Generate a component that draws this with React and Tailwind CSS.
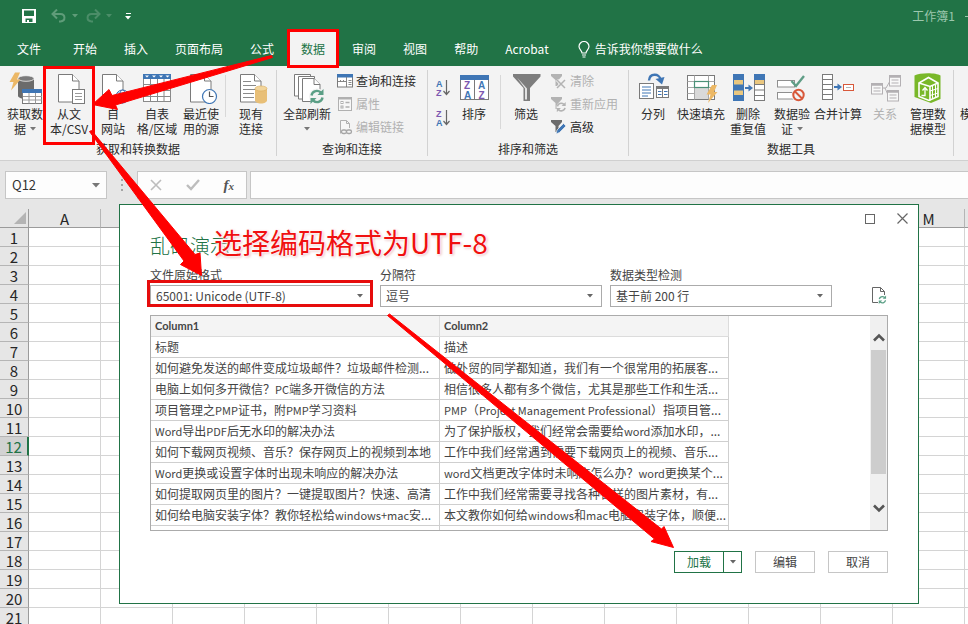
import React, { useState } from "react";

const GREY = "#7a7a7a";
const BLUE = "#3f76b5";

const TABS = ["文件", "开始", "插入", "页面布局", "公式", "数据", "审阅", "视图", "帮助", "Acrobat"];

// B-L sit behind the import dialog, so only the outer columns carry a letter
const COLUMNS = ["A", "", "", "", "", "", "", "", "", "", "", "", "M", ""];
const ROWS = Array.from({ length: 21 }, (_, i) => i + 1);

const PREVIEW = [
  ["标题", "描述"],
  ["如何避免发送的邮件变成垃圾邮件？垃圾邮件检测...", "做外贸的同学都知道，我们有一个很常用的拓展客..."],
  ["电脑上如何多开微信？PC端多开微信的方法", "相信很多人都有多个微信，尤其是那些工作和生活..."],
  ["项目管理之PMP证书，附PMP学习资料", "PMP（Project Management Professional）指项目管..."],
  ["Word导出PDF后无水印的解决办法", "为了保护版权，我们经常会需要给word添加水印，..."],
  ["如何下载网页视频、音乐？保存网页上的视频到本地", "工作中我们经常遇到需要下载网页上的视频、音乐..."],
  ["Word更换或设置字体时出现未响应的解决办法", "word文档更改字体时未响应怎么办？word更换某个..."],
  ["如何提取网页里的图片？一键提取图片？快速、高清", "工作中我们经常需要寻找各种各样的图片素材，有..."],
  ["如何给电脑安装字体？教你轻松给windows+mac安...", "本文教你如何给windows和mac电脑安装字体，顺便..."],
];

/* ---------- icons ---------- */

function Icon({ children }) {
  return (
    <svg width="36" height="32" viewBox="0 0 36 32" fill="none" className="shrink-0" aria-hidden="true">
      {children}
    </svg>
  );
}

function Caret({ className = "" }) {
  return (
    <svg width="6" height="4" viewBox="0 0 6 4" className={className} aria-hidden="true">
      <path d="M0 0h6L3 3.5z" fill="currentColor" />
    </svg>
  );
}

function Doc({ x = 7.5 }) {
  return (
    <g transform={`translate(${x} 2.5)`} stroke={GREY} fill="#fff">
      <path d="M0 0h14l6.500 6.500V27.500H0z" />
      <path d="M14 0v6.500h6.500" />
    </g>
  );
}

function Bolt({ x, y }) {
  return <path transform={`translate(${x} ${y})`} d="M5.500 0h5L7.500 7h3.500L1.500 18l2.500-8.500H0z" fill="#ecb866" />;
}

function GetDataIcon() {
  return (
    <Icon>
      <path d="M11 7v17c0 1.500 3.500 3 8 3s8-1.500 8-3V7z" fill="#6b6b6b" />
      <ellipse cx="19" cy="6.500" rx="8" ry="2.800" fill="#7b7b7b" stroke="#f3f3f3" strokeWidth=".8" />
      <Bolt x={2.5} y={0.5} />
      <rect x="15.500" y="17.500" width="19" height="14" fill="#fff" stroke={GREY} />
      <rect x="15" y="17" width="20" height="4" fill={BLUE} />
      <path d="M22 21v10.500M28.500 21v10.500M16 24.500h19M16 28h19" stroke="#9a9a9a" />
    </Icon>
  );
}

function TextCsvIcon() {
  return (
    <Icon>
      <Doc />
      <rect x="21.500" y="17.500" width="12" height="14" fill="#fff" stroke={GREY} />
      <path d="M24 21.500h7M24 24.500h7M24 27.500h7" stroke="#9a9a9a" />
    </Icon>
  );
}

function WebIcon() {
  return (
    <Icon>
      <Doc />
      <circle cx="27.500" cy="24.500" r="6.500" fill="#fff" stroke={BLUE} />
      <ellipse cx="27.500" cy="24.500" rx="3" ry="6.500" stroke={BLUE} />
      <path d="M21 24.500h13M22 21h11M22 28h11" stroke={BLUE} strokeWidth=".8" />
    </Icon>
  );
}

function TableIcon() {
  return (
    <Icon>
      <rect x="4.500" y="2.500" width="27" height="27" fill="#fff" stroke="#8a8a8a" />
      <rect x="4" y="2" width="28" height="5" fill={BLUE} />
      <path d="M6 3.500h4l-2 2zM13 3.500h4l-2 2zM20 3.500h4l-2 2zM26.500 3.500h4l-2 2z" fill="#fff" />
      <path d="M11.500 7v22.500M18.500 7v22.500M25 7v22.500M4 12.500h28M4 18.500h28M4 24.500h28" stroke="#8a8a8a" />
    </Icon>
  );
}

function RecentIcon() {
  return (
    <Icon>
      <Doc />
      <circle cx="26.500" cy="24.500" r="7" fill="#fff" stroke={BLUE} strokeWidth="1.200" />
      <path d="M26.500 19.500v5h4" stroke="#555" strokeWidth="1.200" />
    </Icon>
  );
}

function ExistingIcon() {
  return (
    <Icon>
      <Doc x={7.5} />
      <path d="M10 9.500h8M10 13.500h13M10 17.500h12M10 21.500h11M10 25.500h11" stroke="#8a8a8a" />
      <path d="M22 16.500v12c0 1.500 2.500 3 6 3s6-1.500 6-3v-12z" fill="#e8bf77" />
      <ellipse cx="28" cy="16.500" rx="6" ry="2.500" fill="#f2d59c" stroke="#dcae5d" strokeWidth=".6" />
    </Icon>
  );
}

function RefreshArrows({ color = "#5b9f86", ...rest }) {
  return (
    <g fill="none" stroke={color} strokeWidth="2.400" {...rest}>
      <path d="M1.500 6.500C2 3 6.500 0 11 3.500" />
      <path d="M12.500 8.500C12 12 7.500 15 3 11.500" />
      <path d="M13.500 0v6h-6z" fill={color} stroke="none" />
      <path d="M.5 15V9h6z" fill={color} stroke="none" />
    </g>
  );
}

function RefreshAllIcon() {
  return (
    <Icon>
      <g stroke={GREY} fill="#fff">
        <path d="M5.500 24V2.500h16V24z" />
        <path d="M9.500 27V4.500h16V27z" />
        <path d="M13.500 29.500v-23h11.500l6 6v17z" />
        <path d="M25 6.500v6h6" />
      </g>
      <circle cx="28" cy="24.500" r="8" fill="#f3f3f3" />
      <RefreshArrows transform="translate(21 17)" />
    </Icon>
  );
}

function Letters({ x, y, size = 9, text, color }) {
  return (
    <text x={x} y={y} fontSize={size} fontWeight="700" fill={color} fontFamily="Liberation Sans, sans-serif">
      {text}
    </text>
  );
}

function SortSmallIcon({ desc }) {
  return (
    <svg width="16" height="18" viewBox="0 0 16 18" fill="none" aria-hidden="true">
      <Letters x="1" y="8" text={desc ? "Z" : "A"} color={desc ? "#7c57b0" : BLUE} />
      <Letters x="1" y="17" text={desc ? "A" : "Z"} color={desc ? BLUE : "#7c57b0"} />
      <path d="M11.500 1v14M8.500 12l3 3.500 3-3.500" stroke="#666" strokeWidth="1.200" />
    </svg>
  );
}

function SortIcon() {
  return (
    <Icon>
      <rect x="4.500" y="4.500" width="28" height="23" fill="#fff" stroke={GREY} />
      <rect x="4" y="3" width="29" height="5" fill={BLUE} />
      <path d="M18.500 8v20" stroke={GREY} />
      <Letters x="8" y="17" size={10} text="Z" color="#7c57b0" />
      <Letters x="8" y="26.500" size={10} text="A" color={BLUE} />
      <Letters x="22" y="17" size={10} text="A" color={BLUE} />
      <Letters x="22.500" y="26.500" size={10} text="Z" color="#7c57b0" />
    </Icon>
  );
}

function FilterIcon() {
  return (
    <Icon>
      <path d="M5 2h27.500v2.500L22 16v13h-6.500V16L5 4.500z" fill="#7d7d7d" />
      <path d="M17 16.500v11h2v-11L9 5.500z" fill="#f3f3f3" opacity=".85" />
    </Icon>
  );
}

function TextToColumnsIcon() {
  return (
    <Icon>
      <rect x="4.500" y="11.500" width="14" height="15" fill="#fff" stroke={GREY} />
      <path d="M7 15h9M7 18h9M7 21h9M7 24h6" stroke={BLUE} />
      <rect x="21.500" y="14.500" width="12" height="11" fill="#fff" stroke={GREY} />
      <rect x="21" y="14" width="13" height="3" fill={GREY} />
      <path d="M23 19.500h3.500M23 22.500h3.500M29 19.500h3.500M29 22.500h3.500" stroke={BLUE} />
      <path d="M27.500 17v9" stroke={GREY} />
      <path d="M14 8.500C14.500 1 24.500 1 25.500 7.500" stroke={BLUE} strokeWidth="2.400" />
      <path d="M20.500 7l9-2-2.500 7.500z" fill={BLUE} />
    </Icon>
  );
}

function FlashFillIcon() {
  return (
    <Icon>
      <rect x="4.500" y="3.500" width="27" height="24" fill="#fff" stroke={GREY} />
      <path d="M11.500 3.500v24M25.500 3.500v24M4.500 9.500h27M4.500 15.500h27M4.500 21.500h27" stroke="#a8a8a8" />
      <rect x="12" y="16" width="13" height="11" fill="#d9d9d9" />
      <rect x="11.500" y="9.500" width="14" height="6" fill="#fff" stroke="#4a9077" strokeWidth="1.200" />
      <Bolt x={23.5} y={13} />
    </Icon>
  );
}

function DedupeIcon() {
  return (
    <Icon>
      <rect x="3" y="2" width="11" height="27" fill={BLUE} />
      <rect x="4" y="8" width="9" height="4.500" fill="#eac77f" />
      <rect x="4" y="18.500" width="9" height="4.500" fill="#eac77f" />
      <rect x="24.500" y="2.500" width="10" height="26" fill="#fff" stroke={GREY} />
      <rect x="24" y="2" width="11" height="6" fill={BLUE} />
      <rect x="25" y="8" width="9" height="4.500" fill="#eac77f" />
      <path d="M24 12.500h11M24 18h11M24 23.500h11" stroke={GREY} />
      <path d="M15 16h5" stroke={BLUE} strokeWidth="2" />
      <path d="M18.500 12.500l4.500 3.500-4.500 3.500z" fill={BLUE} />
    </Icon>
  );
}

function ValidateIcon() {
  return (
    <Icon>
      <rect x="3.500" y="8.500" width="17" height="6.500" fill="#fff" stroke="#8f8f8f" />
      <rect x="3.500" y="20.500" width="17" height="6.500" fill="#fff" stroke="#8f8f8f" />
      <path d="M17.500 9l4.500 5 8-10" stroke="#5f9d86" strokeWidth="2.400" />
      <circle cx="24.500" cy="23" r="7" fill="#f3f3f3" />
      <circle cx="24.500" cy="23" r="5.200" stroke="#d8583a" strokeWidth="2" />
      <path d="M21 19.500l7 7" stroke="#d8583a" strokeWidth="2" />
    </Icon>
  );
}

function ConsolidateIcon() {
  return (
    <Icon>
      <rect x="2.500" y="2.500" width="10" height="25" fill="#fff" stroke={GREY} />
      <path d="M2.500 7.500h10M2.500 12.500h10M2.500 17.500h10M2.500 22.500h10" stroke={GREY} />
      <path d="M14 15h5" stroke={BLUE} strokeWidth="2" />
      <path d="M17.500 11.500l4.500 3.500-4.500 3.500z" fill={BLUE} />
      <rect x="23.500" y="12.500" width="10" height="6" fill="#fff" stroke="#d8583a" />
      <path d="M26 15.500h5" stroke="#b5b5b5" />
    </Icon>
  );
}

function RelationBox({ x, y }) {
  return (
    <g transform={`translate(${x} ${y})`} stroke="#b3b0b3">
      <rect x="0" y="0" width="11" height="10.500" fill="#f8f8f8" />
      <path d="M0 1h11" strokeWidth="2.500" />
      <path d="M2 4.500h7M2 7.500h7" />
    </g>
  );
}

function RelationIcon() {
  return (
    <Icon>
      <path d="M15.500 16L19 16 23 9M18 16l3 7" stroke="#b3b0b3" />
      <RelationBox x={4.5} y={11.5} />
      <RelationBox x={22.5} y={3.5} />
      <RelationBox x={20.5} y={18.5} />
    </Icon>
  );
}

function DataModelIcon() {
  return (
    <Icon>
      <path d="M4.500 3.500C10 .5 26 .5 30.500 3.500V27L21 31 4.500 25z" fill="#79b829" />
      <path d="M9 11l9.500-5.500L28 11v13.500L19 28.500 9 24.500z" fill="#79b829" stroke="#fff" strokeWidth="1.600" />
      <path d="M9 11l11 3.500L28 11M20 14.500v14" stroke="#fff" strokeWidth="1.600" />
      <path d="M22.500 14v13M25.500 13v12.500M20 19l8-2.500M20 23.500l8-2.500" stroke="#fff" />
      <path d="M11.500 23.500H15v-7M12.500 18.500l2.500-3 2.500 3" stroke="#fff" strokeWidth="1.300" />
    </Icon>
  );
}

function SmallIcon({ children }) {
  return (
    <svg width="16" height="16" viewBox="0 0 16 16" fill="none" className="shrink-0" aria-hidden="true">
      {children}
    </svg>
  );
}

function QueriesIcon() {
  return (
    <SmallIcon>
      <rect x=".5" y="1.500" width="15" height="12.500" fill="#fff" stroke={GREY} />
      <rect x="0" y="1" width="16" height="3.500" fill={BLUE} />
      <path d="M9.500 4v10M1 8.500h8M3.500 7v1.500M6.500 7v1.500M11.500 7.500h3M11.500 9.500h3M11.500 11.500h3" stroke={GREY} strokeWidth=".9" />
    </SmallIcon>
  );
}

function PropertiesIcon() {
  return (
    <SmallIcon>
      <rect x="1.500" y="1.500" width="13" height="13" fill="#f7f7f7" stroke="#b0b0b0" />
      <path d="M1.500 2.500h13" stroke="#b0b0b0" strokeWidth="2" />
      <rect x="4" y="5.500" width="2" height="2" stroke="#b0b0b0" />
      <rect x="4" y="10" width="2" height="2" stroke="#b0b0b0" />
      <path d="M8.500 6.500h4M8.500 11h4" stroke="#b0b0b0" strokeWidth="1.300" />
    </SmallIcon>
  );
}

function EditLinksIcon() {
  return (
    <SmallIcon>
      <path d="M3.500 14.500v-13h6l3 3V9" fill="#f7f7f7" stroke="#b0b0b0" />
      <path d="M9.500 1.500v3h3" stroke="#b0b0b0" />
      <rect x="4.500" y="11" width="5" height="3.500" rx="1.700" stroke="#a5a5a5" strokeWidth="1.300" fill="#f3f3f3" />
      <rect x="9.500" y="11" width="5" height="3.500" rx="1.700" stroke="#a5a5a5" strokeWidth="1.300" fill="#f3f3f3" />
    </SmallIcon>
  );
}

function MiniFunnel({ color }) {
  return <path d="M0 1h11v2L7.500 7v6h-3V7L0 3z" fill={color} />;
}

function ClearIcon() {
  return (
    <SmallIcon>
      <MiniFunnel color="#b3b3b3" />
      <path d="M6 7l8 8M14 7l-8 8" stroke="#f3f3f3" strokeWidth="3" />
      <path d="M6 7l8 8M14 7l-8 8" stroke="#b3b3b3" strokeWidth="1.500" />
    </SmallIcon>
  );
}

function ReapplyIcon() {
  return (
    <SmallIcon>
      <MiniFunnel color="#b3b3b3" />
      <circle cx="10.500" cy="11" r="5" fill="#f3f3f3" />
      <RefreshArrows color="#b3b3b3" transform="translate(5.500 6) scale(.68)" />
    </SmallIcon>
  );
}

function AdvancedIcon() {
  return (
    <SmallIcon>
      <MiniFunnel color="#6b6b6b" />
      <path d="M5 15l1-4 6.500-6.500L15 7l-6.500 6.500z" fill={BLUE} stroke="#f3f3f3" strokeWidth=".7" />
    </SmallIcon>
  );
}

/* ---------- ribbon ---------- */

function BigButton({ icon, lines, width, caret, disabled, marked }) {
  return (
    <button
      type="button"
      disabled={disabled}
      className={`relative flex shrink-0 flex-col items-center pt-[6px] whitespace-nowrap ${width} ${
        disabled ? "text-[#b1b1b1]" : "text-[#2b2b2b]"
      }`}
    >
      {icon}
      <span className="mt-[2px] leading-[15px]">{lines[0]}</span>
      {(lines[1] || caret) && (
        <span className="flex h-[15px] items-center gap-1 leading-[15px]">
          {lines[1]}
          {caret && <Caret className="text-[#777]" />}
        </span>
      )}
      {marked && <span className="absolute -inset-x-[4px] top-0 h-[79px] border-3 border-[#f00]" />}
    </button>
  );
}

function SmallButton({ icon, label, disabled }) {
  return (
    <button
      type="button"
      disabled={disabled}
      className={`flex h-[23px] items-center gap-[3px] whitespace-nowrap ${
        disabled ? "text-[#b1b1b1]" : "text-[#2b2b2b]"
      }`}
    >
      {icon}
      {label}
    </button>
  );
}

function Group({ label, children }) {
  return (
    <section className="relative flex shrink-0 flex-col pr-px">
      <div className="flex h-[76px]">{children}</div>
      <div className="text-center leading-[14px] text-[#2b2b2b]">{label}</div>
      <span className="absolute top-1 right-0 h-[86px] w-px bg-[#d2d2d2]" />
    </section>
  );
}

function Divider({ className = "h-[42px]" }) {
  return <span className={`mt-[9px] w-px shrink-0 bg-[#d8d8d8] ${className}`} />;
}

function Ribbon() {
  return (
    <div className="flex h-[95px] overflow-x-clip border-b border-[#d0d0d0] bg-[#f3f3f3]">
      <Group label="获取和转换数据">
        <BigButton width="ml-[3px] w-11" icon={<GetDataIcon />} lines={["获取数", "据"]} caret />
        <BigButton width="w-11 z-10" icon={<TextCsvIcon />} lines={["从文", "本/CSV"]} marked />
        <BigButton width="w-11" icon={<WebIcon />} lines={["自", "网站"]} />
        <BigButton width="w-11" icon={<TableIcon />} lines={["自表", "格/区域"]} />
        <BigButton width="w-11" icon={<RecentIcon />} lines={["最近使", "用的源"]} />
        <Divider className="ml-[2px] h-[42px]" />
        <BigButton width="ml-px mr-px w-12" icon={<ExistingIcon />} lines={["现有", "连接"]} />
      </Group>
      <Group label="查询和连接">
        <BigButton width="w-[60px]" icon={<RefreshAllIcon />} lines={["全部刷新"]} caret />
        <div className="flex w-[90px] flex-col pt-[3px]">
          <SmallButton icon={<QueriesIcon />} label="查询和连接" />
          <SmallButton icon={<PropertiesIcon />} label="属性" disabled />
          <SmallButton icon={<EditLinksIcon />} label="编辑链接" disabled />
        </div>
      </Group>
      <Group label="排序和筛选">
        <div className="flex w-[30px] flex-col items-center gap-3 pt-[13px]">
          <button type="button" aria-label="升序">
            <SortSmallIcon />
          </button>
          <button type="button" aria-label="降序">
            <SortSmallIcon desc />
          </button>
        </div>
        <BigButton width="w-8" icon={<SortIcon />} lines={["排序"]} />
        <Divider className="ml-[10px] h-[54px]" />
        <BigButton width="w-[50px]" icon={<FilterIcon />} lines={["筛选"]} />
        <div className="flex w-[77px] flex-col pt-[3px]">
          <SmallButton icon={<ClearIcon />} label="清除" disabled />
          <SmallButton icon={<ReapplyIcon />} label="重新应用" disabled />
          <SmallButton icon={<AdvancedIcon />} label="高级" />
        </div>
      </Group>
      <Group label="数据工具">
        <BigButton width="w-12" icon={<TextToColumnsIcon />} lines={["分列"]} />
        <BigButton width="w-12" icon={<FlashFillIcon />} lines={["快速填充"]} />
        <BigButton width="w-[46px]" icon={<DedupeIcon />} lines={["删除", "重复值"]} />
        <BigButton width="w-[42px]" icon={<ValidateIcon />} lines={["数据验", "证"]} caret />
        <BigButton width="w-[50px]" icon={<ConsolidateIcon />} lines={["合并计算"]} />
        <BigButton width="w-11" icon={<RelationIcon />} lines={["关系"]} disabled />
        <BigButton width="w-[42px] mr-1" icon={<DataModelIcon />} lines={["管理数", "据模型"]} />
      </Group>
      <button type="button" className="flex shrink-0 px-[6px] pt-10 leading-[15px] text-[#2b2b2b]">
        模
      </button>
    </div>
  );
}

/* ---------- title bar and tabs ---------- */

function TitleBar() {
  return (
    <header className="flex h-8 items-center pl-[22px] text-white">
      <button type="button" aria-label="保存">
        <svg width="14" height="14" viewBox="0 0 14 14" aria-hidden="true">
          <path fillRule="evenodd" fill="#fff" d="M0 0h14v14H0zM2 1.500V7h10V1.500zM3.500 9.500V13H5v-2h2v2h3.500V9.500z" />
        </svg>
      </button>
      <button type="button" aria-label="撤消" className="ml-[15px] flex items-center gap-[6px] text-[#5f9c79]">
        <svg width="15" height="14" viewBox="0 0 15 14" fill="none" aria-hidden="true">
          <path d="M1.500 5h8C14.500 5 15 12 9.500 12.500H8" stroke="currentColor" strokeWidth="2" />
          <path d="M6 .5L1.500 5 6 9.500" stroke="currentColor" strokeWidth="2" />
        </svg>
        <Caret />
      </button>
      <button type="button" aria-label="恢复" className="ml-[8px] flex items-center gap-[5px] text-[#4b8d68]">
        <svg width="15" height="14" viewBox="0 0 15 14" fill="none" aria-hidden="true">
          <path d="M13.500 5h-8C.5 5 0 12 5.500 12.500H7" stroke="currentColor" strokeWidth="2" />
          <path d="M9 .5L13.500 5 9 9.500" stroke="currentColor" strokeWidth="2" />
        </svg>
        <Caret />
      </button>
      <button type="button" aria-label="自定义" className="ml-[13px] flex flex-col items-center gap-[2px]">
        <span className="h-px w-[5px] bg-white" />
        <Caret />
      </button>
      <span className="ml-auto flex items-center gap-[10px] leading-7 whitespace-nowrap text-[#9cc7ae]">
        工作簿1
        <span className="h-px w-[3px] bg-[#9cc7ae]" />
      </span>
    </header>
  );
}

function Tabs() {
  const [active, setActive] = useState("数据");

  return (
    <nav className="flex h-[34px] gap-[3px] pl-[5px] whitespace-nowrap text-white">
      {TABS.map((tab) => (
        <button
          key={tab}
          type="button"
          onClick={() => setActive(tab)}
          className={`relative px-3 first:mr-[5px] ${active === tab ? "bg-[#f3f3f3] text-[#217346]" : ""}`}
        >
          {tab}
          {tab === "数据" && <span className="absolute -inset-x-[2px] -top-[3px] -bottom-[2px] z-10 border-3 border-[#f00]" />}
        </button>
      ))}
      <button type="button" className="ml-[14px] flex items-center gap-[5px]">
        <svg width="12" height="17" viewBox="0 0 12 17" fill="none" stroke="#fff" aria-hidden="true">
          <path d="M4 12C4 9.500 1 8.500 1 5.500a5 5 0 0110 0C11 8.500 8 9.500 8 12z" strokeWidth="1.200" />
          <path d="M4 14h4M4.500 16h3" />
        </svg>
        告诉我你想要做什么
      </button>
    </nav>
  );
}

/* ---------- formula bar and sheet ---------- */

function FormulaBar() {
  return (
    <div className="flex h-12 items-start pt-[10px] pl-[5px]">
      <div className="flex h-7 w-[102px] items-center border border-[#c6c6c6] bg-[#fdfdfd] pr-[6px]">
        <input aria-label="名称框" defaultValue="Q12" className="w-full min-w-0 pl-[6px] text-[13px] text-[#333] outline-none" />
        <svg width="8" height="5" viewBox="0 0 8 5" className="shrink-0" aria-hidden="true">
          <path d="M0 0h8L4 4.500z" fill="#777" />
        </svg>
      </div>
      <div className="flex h-7 w-[30px] flex-col items-center justify-center gap-[3px]">
        <span className="size-[2px] bg-[#a5a5a5]" />
        <span className="size-[2px] bg-[#a5a5a5]" />
        <span className="size-[2px] bg-[#a5a5a5]" />
      </div>
      <div className="flex h-7 w-[110px] items-center justify-around border border-[#c6c6c6] bg-[#fdfdfd]">
        <button type="button" aria-label="取消输入">
          <svg width="12" height="12" viewBox="0 0 12 12" stroke="#bdbdbd" strokeWidth="1.600" aria-hidden="true">
            <path d="M1 1l10 10M11 1L1 11" />
          </svg>
        </button>
        <button type="button" aria-label="输入">
          <svg width="14" height="12" viewBox="0 0 14 12" fill="none" stroke="#bdbdbd" strokeWidth="2.400" aria-hidden="true">
            <path d="M1 6l4 4 8-9" />
          </svg>
        </button>
        <button type="button" className="font-['Liberation_Serif',serif] text-[15px] leading-4 font-bold text-[#555] italic">
          f<span className="text-[11px]">x</span>
        </button>
      </div>
      <input aria-label="编辑栏" className="ml-[3px] h-7 min-w-0 flex-1 border border-r-0 border-[#c6c6c6] bg-[#fdfdfd] outline-none" />
    </div>
  );
}

function Sheet() {
  return (
    <div className="min-h-0 flex-1 overflow-hidden">
      <table className="w-[1037px] table-fixed border-separate border-spacing-0 text-[15px] leading-4 text-[#262626]">
        <thead>
          <tr className="h-[19px]">
            <th className="w-[29px] border-r border-b border-[#9b9b9b] p-0">
              <svg width="12" height="12" viewBox="0 0 12 12" className="ml-[14px]" aria-hidden="true">
                <path d="M12 0v12H0z" fill="#b4b4b4" />
              </svg>
            </th>
            {COLUMNS.map((c, i) => (
              <th key={i} className="border-r border-b border-r-[#b5b5b5] border-b-[#9b9b9b] p-0 pt-[2px] font-normal">
                {c}
              </th>
            ))}
          </tr>
        </thead>
        <tbody>
          {ROWS.map((r) => (
            <tr key={r} className="h-[19px]">
              <th
                className={`border-b border-b-[#b5b5b5] p-0 pt-[2px] font-normal ${
                  r === 12
                    ? "border-r-2 border-r-[#217346] bg-[#d2d2d2] text-[#217346]"
                    : "border-r border-r-[#9b9b9b]"
                }`}
              >
                {r}
              </th>
              {COLUMNS.map((_, i) => (
                <td key={i} className="border-r border-b border-[#d4d4d4] bg-white p-0" />
              ))}
            </tr>
          ))}
        </tbody>
      </table>
    </div>
  );
}

/* ---------- import dialog ---------- */

function Field({ id, label, value, marked }) {
  return (
    <div className="w-[222px]">
      <label htmlFor={id} className="block h-[19px] leading-[18px]">
        {label}
      </label>
      <div className="relative">
        <select id={id} className="block h-[22px] w-full appearance-none border border-[#ababab] bg-white pl-[5px] outline-none">
          <option>{value}</option>
        </select>
        <Caret className="pointer-events-none absolute top-[9px] right-[9px] text-[#666]" />
        {marked && <span className="pointer-events-none absolute -top-[5px] -right-px bottom-0 -left-[3px] border-3 border-[#e60c0c]" />}
      </div>
    </div>
  );
}

// Latin runs are set one size below the Chinese text
function CellText({ text }) {
  return text.split(/([A-Za-z+][A-Za-z+ ]*)/).map((part, i) =>
    i % 2 ? (
      <span key={i} className="text-[11px]">
        {part}
      </span>
    ) : (
      part
    )
  );
}

function Preview() {
  return (
    <div className="flex h-[216px] overflow-hidden border border-[#ababab]">
      <table className="w-[578px] table-fixed border-separate border-spacing-0 self-start text-left whitespace-nowrap">
        <thead>
          <tr className="h-[21px] bg-[#f4f4f4]">
            {["Column1", "Column2"].map((c) => (
              <th
                key={c}
                className="border-r border-b border-[#dcdcdc] py-0 pl-1 font-['Lato',sans-serif] text-[11px] leading-5 font-bold"
              >
                {c}
              </th>
            ))}
          </tr>
        </thead>
        <tbody>
          {PREVIEW.map((row) => (
            <tr key={row[0]} className="h-[21px]">
              {row.map((cell) => (
                <td key={cell} className="overflow-hidden border-r border-b border-[#cfcfcf] py-0 pl-1 leading-5">
                  <CellText text={cell} />
                </td>
              ))}
            </tr>
          ))}
          <tr className="h-[21px]">
            <td className="border-r border-[#cfcfcf]" />
            <td className="border-r border-[#cfcfcf]" />
          </tr>
        </tbody>
      </table>
      <div className="ml-auto flex w-[17px] flex-col items-center bg-[#f0f0f0] py-[17px]">
        <svg width="12" height="9" viewBox="0 0 12 9" fill="none" stroke="#555" strokeWidth="2.600" aria-hidden="true">
          <path d="M1 7.500l5-5 5 5" />
        </svg>
        <div className="mt-2 h-[124px] w-[15px] bg-[#cdcdcd]" />
        <svg width="12" height="9" viewBox="0 0 12 9" fill="none" stroke="#555" strokeWidth="2.600" className="mt-auto" aria-hidden="true">
          <path d="M1 1.500l5 5 5-5" />
        </svg>
      </div>
    </div>
  );
}

function ImportDialog() {
  return (
    <div
      role="dialog"
      aria-label="乱码演示"
      className="absolute top-[204px] right-[49px] left-[119px] border border-[#217346] bg-white text-[#444]"
    >
      <div className="flex h-[27px] justify-end">
        <button type="button" aria-label="最大化" className="flex w-8 items-center justify-center">
          <span className="size-[10px] border border-[#666]" />
        </button>
        <button type="button" aria-label="关闭" className="flex w-8 items-center justify-center">
          <svg width="11" height="11" viewBox="0 0 11 11" stroke="#666" strokeWidth="1.200" aria-hidden="true">
            <path d="M.5.5l10 10M10.500.5l-10 10" />
          </svg>
        </button>
      </div>
      <div className="px-[30px] pb-[30px]">
        <h1 className="text-[20px] leading-7 font-light text-[#217346]">乱码演示</h1>
        <div className="mt-[6px] flex items-end gap-2">
          <Field id="origin" label="文件原始格式" value="65001: Unicode (UTF-8)" marked />
          <Field id="delimiter" label="分隔符" value="逗号" />
          <Field id="detect" label="数据类型检测" value="基于前 200 行" />
          <button type="button" aria-label="刷新" className="mb-[3px] ml-auto">
            <svg width="16" height="17" viewBox="0 0 16 17" fill="none" aria-hidden="true">
              <path d="M6 15.500H.5V.5h8l4 4V8" stroke="#666" />
              <path d="M8.500.5v4h4" stroke="#666" />
              <RefreshArrows transform="translate(6.500 8.500) scale(.56)" />
            </svg>
          </button>
        </div>
        <div className="mt-2">
          <Preview />
        </div>
        <div className="mt-5 flex justify-end gap-[13px]">
          <div className="flex h-[22px] w-[68px] border border-[#217346] text-[#217346]">
            <button type="button" className="flex-1">
              加载
            </button>
            <button type="button" aria-label="加载选项" className="flex w-[18px] items-center justify-center border-l border-[#217346]">
              <Caret className="text-[#666]" />
            </button>
          </div>
          <button type="button" className="h-[22px] w-[60px] border border-[#c6c6c6]">
            编辑
          </button>
          <button type="button" className="h-[22px] w-[60px] border border-[#c6c6c6]">
            取消
          </button>
        </div>
      </div>
      <p className="absolute top-[19px] left-[94px] text-[28px] leading-9 whitespace-nowrap text-[#f01010] [text-shadow:0_0_2px_#fff,0_0_2px_#fff,0_0_3px_#fff,1px_1px_3px_#e09a9a]">
        选择编码格式为UTF-8
      </p>
    </div>
  );
}

/* Hand-drawn pointers: tab -> button -> encoding field -> load button */
function Pointers() {
  return (
    <svg width="968" height="624" viewBox="0 0 968 624" className="pointer-events-none absolute top-0 left-0 z-20" aria-hidden="true">
      <g fill="#f00" stroke="#f00" strokeLinejoin="round">
        <path d="M271.500 55.500L112 95.500 109 89.500 92.500 104.500 117.500 109.500 115.500 105 272.500 57.500z" />
        <path d="M89.500 131.500L184 261 180.500 264.500 201.500 275.500 200 253 195 254.500 91.500 130.500z" />
        <path d="M387.500 315.500L654.500 539 651 541.500 673.500 547.500 664 526.500 661.500 529 389.500 314z" />
      </g>
    </svg>
  );
}

export default function App() {
  return (
    <div className="relative flex h-screen flex-col overflow-hidden bg-[#e6e6e6] font-['Noto_Sans_CJK_SC',sans-serif] text-[12px]">
      <div className="bg-[#217346]">
        <TitleBar />
        <Tabs />
      </div>
      <Ribbon />
      <FormulaBar />
      <Sheet />
      <ImportDialog />
      <Pointers />
    </div>
  );
}
